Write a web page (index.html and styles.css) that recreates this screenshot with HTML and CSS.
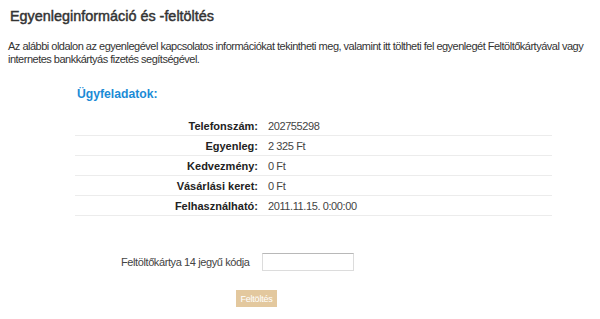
FILE: index.html
```html
<!DOCTYPE html>
<html lang="hu">
<head>
  <meta charset="UTF-8">
  <title>Egyenleginformáció és -feltöltés</title>
  <link rel="stylesheet" href="styles.css">
</head>
<body>
<div class="page">
  <h1>Egyenleginformáció és -feltöltés</h1>
  <p class="intro">Az alábbi oldalon az egyenlegével kapcsolatos információkat tekintheti meg, valamint itt töltheti fel egyenlegét Feltöltőkártyával vagy internetes bankkártyás fizetés segítségével.</p>

  <div class="customer">
    <h2>Ügyfeladatok:</h2>
    <table class="data">
      <tr><th>Telefonszám:</th><td>202755298</td></tr>
      <tr><th>Egyenleg:</th><td>2 325 Ft</td></tr>
      <tr><th>Kedvezmény:</th><td>0 Ft</td></tr>
      <tr><th>Vásárlási keret:</th><td>0 Ft</td></tr>
      <tr><th>Felhasználható:</th><td>2011.11.15. 0:00:00</td></tr>
    </table>
  </div>

  <form class="topup" onsubmit="return false">
    <div class="field">
      <label for="code">Feltöltőkártya 14 jegyű kódja</label>
      <input type="text" id="code">
    </div>
    <button type="submit" class="btn" disabled>Feltöltés</button>
  </form>
</div>
</body>
</html>
```

FILE: styles.css
```css
body {
  margin: 0;
  font-family: "Liberation Sans", Arial, sans-serif;
  font-size: 11px;
  letter-spacing: -0.4px;
  color: #333;
  background: #fff;
}

.page {
  padding: 8px;
}

h1 {
  font-size: 14.4px;
  font-weight: normal;
  -webkit-text-stroke: 0.45px #333;
  letter-spacing: 0;
  line-height: 16px;
  color: #333;
  margin: 0 0 0 2px;
}

.intro {
  margin: 16px 0 0 0;
  line-height: 13px;
  letter-spacing: -0.5px;
}

.customer {
  margin: 21px 0 0 67px;
  width: 477px;
}

h2 {
  font-size: 12.2px;
  font-weight: bold;
  letter-spacing: 0;
  line-height: 14px;
  color: #1b8bd6;
  margin: 0 0 0 2px;
}

.data {
  width: 100%;
  border-collapse: collapse;
  margin-top: 15px;
}

.data th,
.data td {
  height: 19px;
  padding: 0;
  border-bottom: 1px solid #ececec;
  vertical-align: middle;
}

.data th {
  width: 183px;
  text-align: right;
  font-weight: bold;
  letter-spacing: 0;
  color: #222;
  padding-right: 10px;
}

.data td {
  color: #444;
}

.topup {
  margin-top: 37px;
}

.field {
  display: flex;
  align-items: center;
  margin-left: 113px;
  gap: 13px;
}

.field label {
  color: #444;
}

.field input {
  box-sizing: border-box;
  width: 92px;
  height: 18px;
  border: 1px solid #dcdcdc;
  border-top-color: #b8b8b8;
  padding: 1px 3px;
  margin: 0;
}

.btn {
  display: block;
  box-sizing: border-box;
  margin: 19px 0 0 228px;
  width: 41px;
  height: 17px;
  background: #e3c89e;
  color: #fff;
  border: none;
  font-family: inherit;
  font-size: 9px;
  letter-spacing: -0.2px;
  padding: 0;
}
```
